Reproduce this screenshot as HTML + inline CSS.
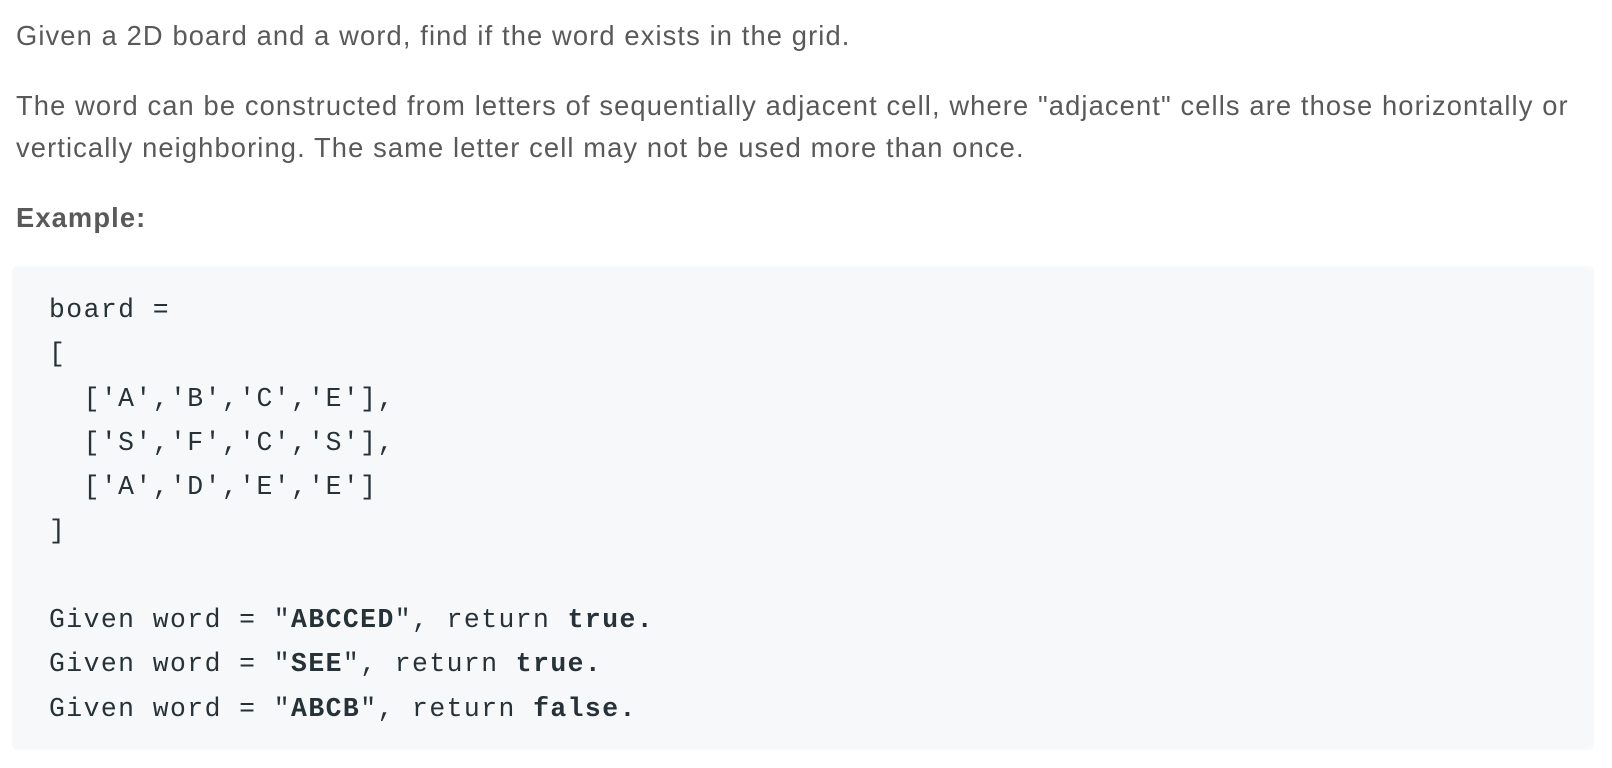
<!DOCTYPE html>
<html><head><meta charset="utf-8"><style>
body{margin:0;background:#fff;width:1612px;height:768px;overflow:hidden;font-family:"Liberation Sans",sans-serif;color:#595959;}
.p{position:absolute;left:16px;font-size:27.3px;letter-spacing:1.12px;line-height:42px;white-space:nowrap}
.box{position:absolute;left:12px;top:266px;width:1582px;height:484px;background:#f7f8fa;border-radius:6px}
pre{position:absolute;left:49px;top:288px;margin:0;font-family:"Liberation Mono",monospace;font-size:26.4px;letter-spacing:1.45px;line-height:44.3px;color:#263238}
b{font-weight:bold}
</style></head><body>
<div class="p" style="top:15px">Given a 2D board and a word, find if the word exists in the grid.</div>
<div class="p" style="top:85px">The word can be constructed from letters of sequentially adjacent cell, where "adjacent" cells are those horizontally or<br>vertically neighboring. The same letter cell may not be used more than once.</div>
<div class="p" style="top:197px;font-weight:bold">Example:</div>
<div class="box"></div>
<pre>board =
[
  ['A','B','C','E'],
  ['S','F','C','S'],
  ['A','D','E','E']
]

Given word = "<b>ABCCED</b>", return <b>true.</b>
Given word = "<b>SEE</b>", return <b>true.</b>
Given word = "<b>ABCB</b>", return <b>false.</b></pre>
</body></html>
